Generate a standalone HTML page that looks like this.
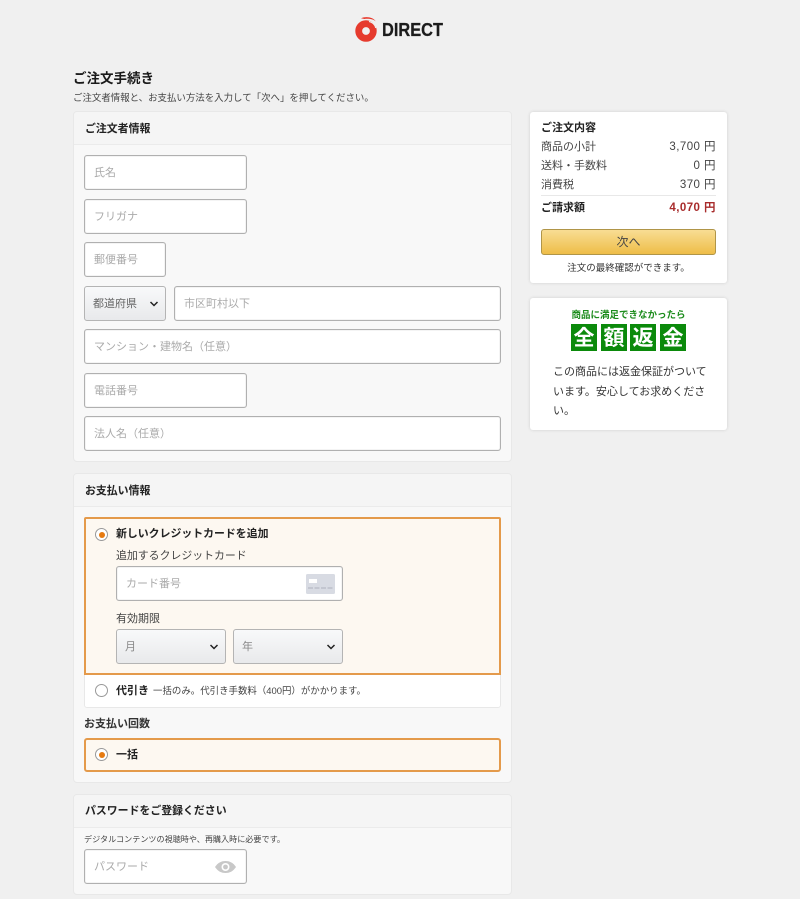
<!DOCTYPE html>
<html lang="ja">
<head>
<meta charset="utf-8">
<title>DIRECT</title>
<style>
html,body{margin:0;padding:0}
body{width:800px;height:899px;overflow:hidden;position:relative;background:#f0f0f0;font-family:"Liberation Sans","Noto Sans CJK JP",sans-serif;color:#222}
#w{position:absolute;left:0;top:0;width:800px;height:899px;filter:blur(.3px)}
.a{position:absolute;white-space:nowrap}
.sec{position:absolute;left:73px;width:437px;background:#f8f8f8;border:1px solid #e8e8e8;border-radius:4px;box-sizing:content-box}
.hd{position:absolute;left:0;top:0;right:0;height:32px;border-bottom:1px solid #ebebeb;background:#f5f5f5;border-radius:4px 4px 0 0}
.hd span{position:absolute;left:11px;top:9px;font-size:10.9px;line-height:16px;font-weight:bold;color:#222}
.in{position:absolute;box-sizing:border-box;background:#fff;border:1px solid #b0b0b0;border-radius:3px;box-shadow:inset 0 0 1px #b8b8b8;height:35px;font-size:11px;line-height:35px;color:#aaa;padding-left:9px;white-space:nowrap}
.sel{position:absolute;box-sizing:border-box;background:linear-gradient(#f8f9fa,#e8e9eb);border:1px solid #b4b4b4;border-radius:3px;height:35px;font-size:11px;line-height:35px;color:#888;padding-left:8px;white-space:nowrap}
.sel svg{position:absolute;top:13px;right:6px}
.card{position:absolute;left:530px;width:197px;background:#fff;border-radius:3px;box-shadow:0 0 3px rgba(0,0,0,.14)}
.r{position:absolute;box-sizing:border-box;width:13px;height:13px;border-radius:50%;border:1px solid #999;background:#fff}
.r i{position:absolute;left:2.5px;top:2.5px;width:6px;height:6px;border-radius:50%;background:#e67a10}
.box{position:absolute;box-sizing:border-box;background:#fdf8f1;border:2px solid #e49a4b}
.g{position:absolute;top:324px;width:26px;height:27px;background:#0b8a0b;color:#fff;font-size:21px;font-weight:bold;line-height:27px;text-align:center;font-family:"Noto Sans CJK JP",sans-serif}
.row{font-size:11px;line-height:16px;color:#444}
.n{font-size:11.5px;letter-spacing:.45px}
</style>
</head>
<body>
<div id="w">
<!-- logo -->
<svg class="a" style="left:355px;top:15px" width="24" height="28" viewBox="0 0 24 28">
<path d="M6 3.200C11 1.200 18 2 20.800 6.500 18.500 4 13 3.400 9.500 4z" fill="#e8392c"/>
<circle cx="11" cy="16" r="7.300" fill="none" stroke="#e63b2e" stroke-width="6.800"/>
<path d="M14 6.400C17.500 7.200 20 9.500 20.800 13" fill="none" stroke="#f0f0f0" stroke-width="1.200"/>
</svg>
<div class="a" style="left:382px;top:18px;font-size:18px;line-height:24px;font-weight:bold;color:#1c1c1c;transform:scaleX(.91);transform-origin:left;-webkit-text-stroke:.25px #1c1c1c">DIRECT</div>

<div class="a" style="left:73px;top:69px;font-size:13.5px;line-height:20px;font-weight:bold;color:#1a1a1a">ご注文手続き</div>
<div class="a" style="left:73px;top:92px;font-size:9.45px;line-height:14px;color:#444">ご注文者情報と、お支払い方法を入力して「次へ」を押してください。</div>

<!-- section 1 -->
<div class="sec" style="top:111px;height:349px"><div class="hd"><span>ご注文者情報</span></div></div>
<div class="in" style="left:84px;top:155px;width:163px">氏名</div>
<div class="in" style="left:84px;top:199px;width:163px">フリガナ</div>
<div class="in" style="left:84px;top:242px;width:82px">郵便番号</div>
<div class="sel" style="left:84px;top:286px;width:82px;color:#666">都道府県<svg width="10" height="8" viewBox="0 0 10 8"><path d="M1.500 2l3.500 3.500L8.500 2" fill="none" stroke="#222" stroke-width="1.500"/></svg></div>
<div class="in" style="left:174px;top:286px;width:327px">市区町村以下</div>
<div class="in" style="left:84px;top:329px;width:417px">マンション・建物名（任意）</div>
<div class="in" style="left:84px;top:373px;width:163px">電話番号</div>
<div class="in" style="left:84px;top:416px;width:417px">法人名（任意）</div>

<!-- section 2 -->
<div class="sec" style="top:473px;height:308px"><div class="hd"><span>お支払い情報</span></div></div>
<div class="a" style="left:84px;top:670px;width:417px;height:38px;box-sizing:border-box;background:#fff;border:1px solid #e8e8e8;border-radius:0 0 3px 3px"></div>
<div class="box" style="left:84px;top:517px;width:417px;height:158px;border-radius:2px 2px 0 0"></div>
<div class="r" style="left:95px;top:528px"><i></i></div>
<div class="a" style="left:116px;top:526px;font-size:10.9px;line-height:16px;font-weight:bold;color:#222">新しいクレジットカードを追加</div>
<div class="a" style="left:116px;top:548px;font-size:10.9px;line-height:16px;color:#444">追加するクレジットカード</div>
<div class="in" style="left:116px;top:566px;width:227px">カード番号
<svg style="position:absolute;left:189px;top:7px" width="29" height="20" viewBox="0 0 29 20"><rect width="29" height="20" rx="1.500" fill="#d8dbe3"/><rect x="3" y="5" width="8" height="4" fill="#fff"/><path d="M2 14h25" stroke="#aeb2bd" stroke-width="1" stroke-dasharray="5 1.500"/></svg></div>
<div class="a" style="left:116px;top:611px;font-size:11px;line-height:16px;color:#444">有効期限</div>
<div class="sel" style="left:116px;top:629px;width:110px">月<svg width="10" height="8" viewBox="0 0 10 8"><path d="M1.500 2l3.500 3.500L8.500 2" fill="none" stroke="#222" stroke-width="1.500"/></svg></div>
<div class="sel" style="left:233px;top:629px;width:110px">年<svg width="10" height="8" viewBox="0 0 10 8"><path d="M1.500 2l3.500 3.500L8.500 2" fill="none" stroke="#222" stroke-width="1.500"/></svg></div>
<div class="r" style="left:95px;top:684px"></div>
<div class="a" style="left:116px;top:683px;font-size:11px;line-height:16px;font-weight:bold;color:#222">代引き</div>
<div class="a" style="left:153px;top:685px;font-size:9.45px;line-height:14px;color:#444">一括のみ。代引き手数料（400円）がかかります。</div>
<div class="a" style="left:84px;top:716px;font-size:11px;line-height:16px;font-weight:bold;color:#333">お支払い回数</div>
<div class="box" style="left:84px;top:738px;width:417px;height:34px;border-radius:3px"></div>
<div class="r" style="left:95px;top:748px"><i></i></div>
<div class="a" style="left:116px;top:747px;font-size:11px;line-height:16px;font-weight:bold;color:#222">一括</div>

<!-- section 3 -->
<div class="sec" style="top:794px;height:99px"><div class="hd"><span style="top:8px">パスワードをご登録ください</span></div></div>
<div class="a" style="left:84px;top:833px;font-size:8.1px;line-height:13px;color:#444">デジタルコンテンツの視聴時や、再購入時に必要です。</div>
<div class="in" style="left:84px;top:849px;width:163px">パスワード
<svg style="position:absolute;left:129px;top:9px" width="23" height="16" viewBox="0 0 23 16"><path d="M1 8C4 3.500 7.500 2 11.500 2S19 3.500 22 8c-3 4.500-6.500 6-10.500 6S4 12.500 1 8z" fill="#c8c8c8"/><circle cx="11.500" cy="8" r="4" fill="#fff"/><circle cx="11.500" cy="8" r="2.400" fill="#c8c8c8"/></svg></div>

<!-- summary card -->
<div class="card" style="top:112px;height:171px"></div>
<div class="a" style="left:541px;top:120px;font-size:11px;line-height:16px;font-weight:bold;color:#222">ご注文内容</div>
<div class="a row" style="left:541px;top:139px">商品の小計</div>
<div class="a row n" style="right:84px;top:138.500px">3,700 円</div>
<div class="a row" style="left:541px;top:158px">送料・手数料</div>
<div class="a row n" style="right:84px;top:158px">0 円</div>
<div class="a row" style="left:541px;top:177px">消費税</div>
<div class="a row n" style="right:84px;top:177px">370 円</div>
<div class="a" style="left:541px;top:195px;width:175px;height:1px;background:#e8e8e8"></div>
<div class="a" style="left:541px;top:200px;font-size:11px;line-height:16px;font-weight:bold;color:#222">ご請求額</div>
<div class="a n" style="right:84px;top:200px;line-height:16px;font-weight:bold;color:#a82c2c">4,070 円</div>
<div class="a" style="left:541px;top:229px;width:175px;height:26px;box-sizing:border-box;border:1px solid #b09548;border-radius:3px;background:linear-gradient(#f8dd94,#eebd48);font-size:12px;line-height:25px;text-align:center;color:#444">次へ</div>
<div class="a" style="left:530px;width:197px;top:262px;font-size:9.5px;line-height:14px;text-align:center;color:#333">注文の最終確認ができます。</div>

<!-- guarantee card -->
<div class="card" style="top:298px;height:132px"></div>
<div class="a" style="left:530px;width:197px;top:308px;font-size:9.500px;line-height:15px;font-weight:bold;text-align:center;color:#1c8c1c">商品に満足できなかったら</div>
<div class="g" style="left:571px">全</div>
<div class="g" style="left:601px">額</div>
<div class="g" style="left:630px">返</div>
<div class="g" style="left:660px">金</div>
<div class="a" style="left:553px;top:363px;width:156px;white-space:normal;font-size:11px;line-height:19.500px;color:#333">この商品には返金保証がついています。安心してお求めください。</div>
</div>
</body>
</html>
